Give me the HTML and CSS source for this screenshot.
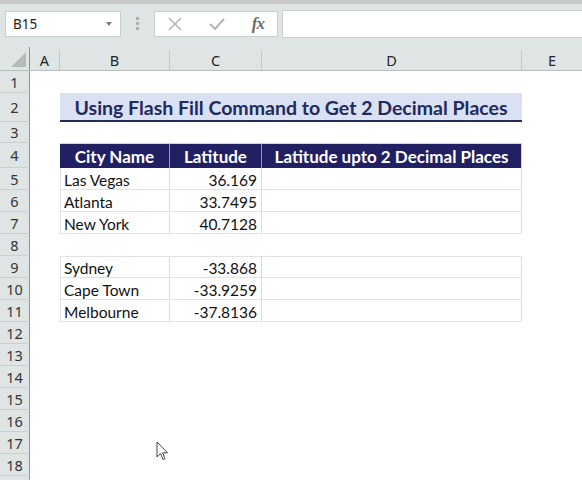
FILE: index.html
```html
<!DOCTYPE html>
<html lang="en">
<head>
    <meta charset="UTF-8">
    <meta name="viewport" content="width=device-width, initial-scale=1.0">
    <title>Flash Fill - 2 Decimal Places</title>
    <link rel="stylesheet" href="styles.css">
</head>
<body>
    <div class="app">
        <div class="top-strip"></div>

        <div class="formula-bar">
            <div class="name-box">
                <span>B15</span>
                <span class="caret"></span>
            </div>
            <div class="grip"><i></i><i></i><i></i></div>
            <div class="fx-buttons">
                <svg width="14" height="14" viewBox="0 0 14 14">
                    <path d="M1 1 L13 13 M13 1 L1 13" stroke="#b5b5b5" stroke-width="1.6" fill="none"/>
                </svg>
                <svg width="16" height="12" viewBox="0 0 16 12">
                    <path d="M1 6 L6 11 L15 1" stroke="#b5b5b5" stroke-width="2" fill="none"/>
                </svg>
                <span class="fx">fx</span>
            </div>
            <div class="formula-input"></div>
        </div>

        <div class="sheet">
            <div class="row col-heads">
                <div class="corner"><span class="triangle"></span></div>
                <div class="col-head">A</div>
                <div class="col-head">B</div>
                <div class="col-head">C</div>
                <div class="col-head">D</div>
                <div class="col-head">E</div>
            </div>

            <div class="row"><div class="row-head">1</div></div>

            <div class="row title-row">
                <div class="row-head">2</div>
                <div class="title">Using Flash Fill Command to Get 2 Decimal Places</div>
            </div>

            <div class="row h21"><div class="row-head">3</div></div>

            <div class="row h25">
                <div class="row-head">4</div>
                <div class="th first">City Name</div>
                <div class="th">Latitude</div>
                <div class="th">Latitude upto 2 Decimal Places</div>
            </div>
            <div class="row">
                <div class="row-head">5</div>
                <div class="td first">Las Vegas</div>
                <div class="td num">36.169</div>
                <div class="td"></div>
            </div>
            <div class="row">
                <div class="row-head">6</div>
                <div class="td first">Atlanta</div>
                <div class="td num">33.7495</div>
                <div class="td"></div>
            </div>
            <div class="row">
                <div class="row-head">7</div>
                <div class="td first">New York</div>
                <div class="td num">40.7128</div>
                <div class="td"></div>
            </div>

            <div class="row"><div class="row-head">8</div></div>

            <div class="row">
                <div class="row-head">9</div>
                <div class="td first top">Sydney</div>
                <div class="td num top">-33.868</div>
                <div class="td top"></div>
            </div>
            <div class="row">
                <div class="row-head">10</div>
                <div class="td first">Cape Town</div>
                <div class="td num">-33.9259</div>
                <div class="td"></div>
            </div>
            <div class="row">
                <div class="row-head">11</div>
                <div class="td first">Melbourne</div>
                <div class="td num">-37.8136</div>
                <div class="td"></div>
            </div>

            <div class="row"><div class="row-head">12</div></div>
            <div class="row"><div class="row-head">13</div></div>
            <div class="row"><div class="row-head">14</div></div>
            <div class="row"><div class="row-head">15</div></div>
            <div class="row"><div class="row-head">16</div></div>
            <div class="row"><div class="row-head">17</div></div>
            <div class="row"><div class="row-head">18</div></div>
            <div class="row"><div class="row-head"></div></div>
        </div>

        <svg class="cursor" width="13" height="21" viewBox="0 0 13 21">
            <path d="M1 1 L1 16 L4.5 12.5 L7 18.5 L9 17.6 L6.6 11.8 L11.5 11.8 Z" fill="#fff" stroke="#444" stroke-width="1" stroke-linejoin="round"/>
        </svg>
    </div>
</body>
</html>
```

FILE: styles.css
```css
body {
    margin: 0;
    background: #ffffff;
    font-family: "Noto Sans", "Open Sans", sans-serif;
}

.app {
    position: relative;
    width: 582px;
    height: 480px;
    overflow: hidden;
}

.top-strip {
    height: 4px;
    background: #c8c8c8;
}

/* formula bar */

.formula-bar {
    display: flex;
    align-items: center;
    height: 43px;
    padding: 0 0 4px 5px;
    box-sizing: border-box;
    background: #dfe5e5;
}

.name-box {
    display: flex;
    align-items: center;
    justify-content: space-between;
    width: 116px;
    height: 26px;
    padding: 0 8px 0 7px;
    box-sizing: border-box;
    background: #ffffff;
    border: 1px solid #c9cdcd;
    font-size: 13.5px;
    color: #222222;
}

.caret {
    width: 0;
    height: 0;
    border-left: 3.5px solid transparent;
    border-right: 3.5px solid transparent;
    border-top: 4px solid #7a7a7a;
}

.grip {
    display: flex;
    flex-direction: column;
    gap: 2px;
    margin: 0 15px 0 15px;
}

.grip i {
    display: block;
    width: 3px;
    height: 3px;
    background: #a9b0b0;
}

.fx-buttons {
    display: flex;
    align-items: center;
    justify-content: space-between;
    width: 124px;
    height: 26px;
    padding: 0 13px 0 13px;
    box-sizing: border-box;
    background: #ffffff;
    border: 1px solid #c9cdcd;
}

.fx {
    font-family: "Liberation Serif", serif;
    font-style: italic;
    font-weight: bold;
    font-size: 17px;
    color: #6a6a6a;
    letter-spacing: -1px;
}

.formula-input {
    flex: 1;
    height: 26px;
    margin-left: 4px;
    background: #ffffff;
    border: 1px solid #c9cdcd;
    border-right: none;
}

/* sheet grid */

.row {
    display: grid;
    grid-template-columns: 30px 30px 110px 92px 260px 60px;
    height: 22px;
}

.h21 { height: 21px; }
.h25 { height: 25px; }
.title-row { height: 29px; }

.col-heads {
    height: 24px;
    background: #dfe5e5;
    border-bottom: 1px solid #b9bfbf;
    box-sizing: border-box;
}

.corner {
    position: relative;
    border-right: 1px solid #8e9494;
}

.triangle {
    position: absolute;
    right: 3px;
    bottom: 3px;
    width: 0;
    height: 0;
    border-left: 15px solid transparent;
    border-bottom: 15px solid #b3bbbb;
}

.col-head {
    display: flex;
    align-items: center;
    justify-content: center;
    font-size: 14.5px;
    color: #262626;
    border-right: 1px solid #c3c9c9;
    margin-top: 3px;
}

.col-head:last-child {
    border-right: none;
}

.row-head {
    grid-column: 1;
    display: flex;
    align-items: center;
    justify-content: center;
    background: #dfe5e5;
    border-right: 1px solid #8e9494;
    border-bottom: 1px solid #c9d0d0;
    box-sizing: border-box;
    font-size: 14.5px;
    color: #333333;
}

/* table */

.title {
    grid-column: 3 / 6;
    display: flex;
    align-items: center;
    justify-content: center;
    background: #d9e1f2;
    border-bottom: 2px solid #222a5e;
    box-sizing: border-box;
    font-family: Lato, "Liberation Sans", sans-serif;
    font-weight: bold;
    font-size: 19.5px;
    color: #222a5e;
    padding-top: 1px;
    white-space: nowrap;
}

.th, .td {
    display: flex;
    align-items: center;
    box-sizing: border-box;
    font-family: Lato, "Liberation Sans", sans-serif;
    font-size: 15.5px;
    white-space: nowrap;
}

.th {
    justify-content: center;
    background: #202062;
    color: #ffffff;
    font-weight: bold;
    font-size: 17px;
    border-top: 1px solid #d4d4d4;
    border-right: 1px solid #9a9ab8;
}

.th.first {
    grid-column: 3;
}

.th:last-child {
    border-right: 1px solid #d4d4d4;
}

.td {
    padding: 2px 4px 0 3px;
    color: #111111;
    border-right: 1px solid #dcdcdc;
    border-bottom: 1px solid #e2e2e2;
}

.td.first {
    grid-column: 3;
    border-left: 1px solid #e2e2e2;
}

.td.top {
    border-top: 1px solid #e2e2e2;
}

.td.num {
    justify-content: flex-end;
}

.cursor {
    position: absolute;
    left: 156px;
    top: 441px;
}
```
